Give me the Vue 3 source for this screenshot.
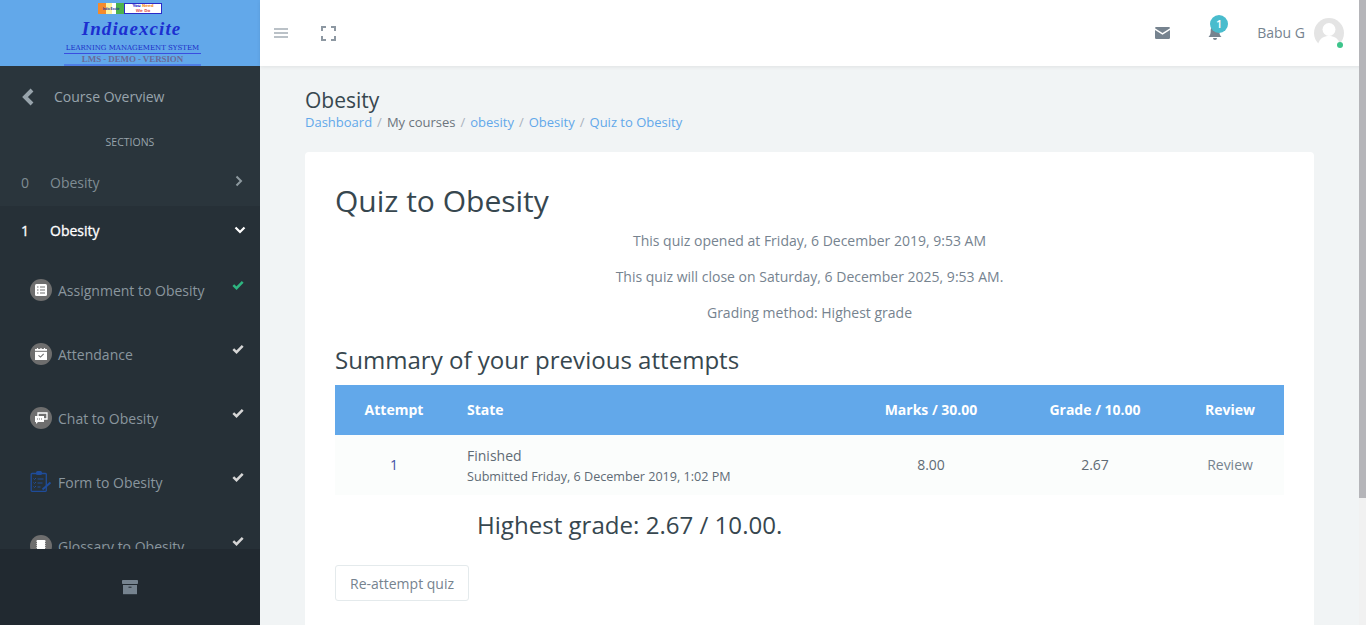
<script setup>
const items = [
  { name: 'Assignment to Obesity', icon: 'assign', done: true },
  { name: 'Attendance', icon: 'attend' },
  { name: 'Chat to Obesity', icon: 'chat' },
  { name: 'Form to Obesity', icon: 'form' },
  { name: 'Glossary to Obesity', icon: 'gloss' }
]
</script>

<template>
  <div class="app">
    <aside class="side">
      <div class="logo">
        <div class="logo-top">
          <span class="flag"><span class="flag-t">India Excite</span></span>
          <span class="need"><span>You <b>Need</b></span><span class="we">We Do</span></span>
        </div>
        <div class="brand">Indiaexcite</div>
        <div class="lms">LEARNING MANAGEMENT SYSTEM</div>
        <div class="demo">LMS - DEMO - VERSION</div>
      </div>
      <nav class="nav">
        <div class="back">
          <svg width="14" height="18" viewBox="0 0 14 18"><path d="M11 2 4 9l7 7" fill="none" stroke="#98a4ac" stroke-width="4"/></svg>
          <span>Course Overview</span>
        </div>
        <div class="sec-title">SECTIONS</div>
        <div class="sec">
          <span class="num">0</span><span class="sec-name">Obesity</span>
          <svg class="chev" width="8" height="12" viewBox="0 0 8 12"><path d="M1.500 1.500 6 6l-4.500 4.500" fill="none" stroke="#8d999f" stroke-width="2"/></svg>
        </div>
        <div class="sec open">
          <span class="num">1</span><span class="sec-name">Obesity</span>
          <svg class="chev-d" width="12" height="8" viewBox="0 0 12 8"><path d="M1.500 1.500 6 6l4.500-4.500" fill="none" stroke="#fff" stroke-width="2.200"/></svg>
        </div>
        <ul class="list">
          <li v-for="it in items" :key="it.name" class="item">
            <span class="ic" :class="{ blue: it.icon === 'form' }">
              <svg v-if="it.icon === 'assign'" width="14" height="14" viewBox="0 0 14 14"><rect x="1" y="1" width="12" height="12" rx="1.500" fill="#fff"/><path d="M3 4h1.500M6 4h5M3 7h1.500M6 7h5M3 10h1.500M6 10h5" stroke="#6e6e6e" stroke-width="1.100"/></svg>
              <svg v-else-if="it.icon === 'attend'" width="14" height="14" viewBox="0 0 14 14"><path d="M1 2h12v11H1z" fill="#fff"/><path d="M1 4.300h12" stroke="#6e6e6e"/><path d="M3.500 1v2M7 1v2M10.500 1v2" stroke="#fff" stroke-width="1.200"/><path d="m4.500 8.300 2 1.800 3.200-3.200" fill="none" stroke="#6e6e6e" stroke-width="1.100"/></svg>
              <svg v-else-if="it.icon === 'chat'" width="14" height="14" viewBox="0 0 14 14"><path d="M4 2h9v6H4z" fill="none" stroke="#fff" stroke-width="1.300"/><path d="M1 5h9v6H4l-2 2v-2H1z" fill="#fff"/><path d="M3 8h1M5 8h1M7 8h1" stroke="#6e6e6e"/></svg>
              <svg v-else-if="it.icon === 'form'" width="22" height="24" viewBox="0 0 22 24"><path d="M2 3.500h13.500a.8.8 0 0 1 .8.8V20.500a.8.8 0 0 1-.8.8H2a.8.8 0 0 1-.8-.8V4.300a.8.8 0 0 1 .8-.8z" fill="none" stroke="#1f4c9a" stroke-width="1.300"/><rect x="6" y="1" width="6" height="4" rx="1.500" fill="#1f4c9a"/><path d="M3.500 8.500l1 1 1.500-1.500M7.500 9h6M3.500 12.500l1 1 1.500-1.500M7.500 13h5M3.500 16.500l1 1 1.500-1.500M7.500 17h3" fill="none" stroke="#1f4c9a" stroke-width="1"/><path d="M12.500 19.500l8-7" stroke="#1f4c9a" stroke-width="2"/></svg>
              <svg v-else width="14" height="14" viewBox="0 0 14 14"><rect x="2.500" y="1" width="9" height="12" rx="1" fill="#fff"/><path d="M2.500 3v8M11.500 3v8" stroke="#6e6e6e" stroke-dasharray="1 1"/></svg>
            </span>
            <span class="item-name">{{ it.name }}</span>
            <svg class="check" :class="{ green: it.done }" width="12" height="10" viewBox="0 0 12 10"><path d="M1.300 5.200 4.500 8.200 10.700 1.800" fill="none" stroke="currentColor" stroke-width="2.500"/></svg>
          </li>
        </ul>
      </nav>
      <div class="side-foot">
        <svg width="16" height="15" viewBox="0 0 16 15"><rect y="0" width="16" height="4" rx=".8" fill="#76838f"/><path d="M1 5h14v9.200H1z" fill="#76838f"/><path d="M6.500 7.200h3" stroke="#212930" stroke-width="1"/></svg>
      </div>
    </aside>

    <div class="main">
      <header class="top">
        <button class="ibtn menu" aria-label="Menu"><svg width="14" height="10" viewBox="0 0 14 10"><path d="M0 1h14M0 5h14M0 9h14" stroke="#76838f" stroke-width="1.200"/></svg></button>
        <button class="ibtn full" aria-label="Fullscreen"><svg width="15" height="15" viewBox="0 0 15 15"><path d="M1 5V1h4M10 1h4v4M14 10v4h-4M5 14H1v-4" fill="none" stroke="#8d98a2" stroke-width="2"/></svg></button>
        <div class="grow"></div>
        <svg class="mail" width="15" height="12" viewBox="0 0 15 12"><path d="M0 1.300A1.300 1.300 0 0 1 1.300 0h12.400A1.300 1.300 0 0 1 15 1.300L7.500 6 0 1.300z" fill="#76838f"/><path d="M0 3l7.500 4.700L15 3v7.700a1.300 1.300 0 0 1-1.300 1.300H1.300A1.300 1.300 0 0 1 0 10.700z" fill="#76838f"/></svg>
        <div class="bell">
          <svg width="14" height="16" viewBox="0 0 14 16"><path d="M7 1c3 0 4.300 2.300 4.300 5 0 3 .9 4.700 2.200 6H.5C1.800 10.700 2.700 9 2.700 6 2.700 3.300 4 1 7 1z" fill="#76838f"/><path d="M5 13h4a2 2 0 0 1-4 0z" fill="#76838f"/></svg>
          <span class="badge">1</span>
        </div>
        <span class="user">Babu G</span>
        <div class="avatar">
          <svg width="30" height="30" viewBox="0 0 30 30"><circle cx="15" cy="15" r="15" fill="#e4e4e4"/><circle cx="15" cy="11.500" r="6.500" fill="#fff"/><path d="M4 26c2-6 6-8 11-8s9 2 11 8a15 15 0 0 1-22 0z" fill="#fff"/></svg>
          <span class="online"></span>
        </div>
      </header>

      <div class="content">
        <h4 class="page-title">Obesity</h4>
        <div class="crumbs">
          <a>Dashboard</a><i>/</i><span>My courses</span><i>/</i><a>obesity</a><i>/</i><a>Obesity</a><i>/</i><a>Quiz to Obesity</a>
        </div>
        <section class="card">
          <h2 class="title">Quiz to Obesity</h2>
          <p class="info">This quiz opened at Friday, 6 December 2019, 9:53 AM</p>
          <p class="info">This quiz will close on Saturday, 6 December 2025, 9:53 AM.</p>
          <p class="info">Grading method: Highest grade</p>
          <h3 class="sub">Summary of your previous attempts</h3>
          <table class="tbl">
            <thead>
              <tr>
                <th class="c1">Attempt</th>
                <th class="c2">State</th>
                <th class="c3">Marks / 30.00</th>
                <th class="c4">Grade / 10.00</th>
                <th class="c5">Review</th>
              </tr>
            </thead>
            <tbody>
              <tr>
                <td class="c1 link">1</td>
                <td class="c2">Finished<div class="small">Submitted Friday, 6 December 2019, 1:02 PM</div></td>
                <td class="c3">8.00</td>
                <td class="c4">2.67</td>
                <td class="c5 rev">Review</td>
              </tr>
            </tbody>
          </table>
          <div class="highest">Highest grade: 2.67 / 10.00.</div>
          <button class="btn">Re-attempt quiz</button>
        </section>
      </div>
    </div>
    <div class="sbar"><div class="thumb"></div></div>
  </div>
</template>

<style>
html, body { margin: 0; height: 100%; overflow: hidden; }
</style>

<style scoped>
.app { display: flex; width: 1366px; height: 625px; overflow: hidden; position: relative; font-family: "Open Sans", sans-serif; font-size: 14px; color: #6c757d; background: #f1f4f5; }
.side { width: 260px; flex: none; display: flex; flex-direction: column; background: #263238; }
.logo { height: 66px; flex: none; background: #62a8ea; display: flex; flex-direction: column; align-items: center; overflow: hidden; box-sizing: border-box; padding-top: 3px; }
.logo-top { display: flex; height: 11px; }
.flag { width: 26px; background: linear-gradient(90deg, #f58b2c 0 30%, #fdf3a0 30% 55%, #fff 55% 70%, #4cb24c 70%); display: flex; align-items: center; justify-content: center; overflow: hidden; }
.flag-t { font: bold 3px "Liberation Sans", sans-serif; color: #1a2a9a; white-space: nowrap; }
.need { width: 38px; background: #fff; border: 1px solid #2a2ac8; box-sizing: border-box; display: flex; flex-direction: column; align-items: center; font: bold 4px/4.500px "DejaVu Sans", sans-serif; color: #2a2ac8; overflow: hidden; white-space: nowrap; }
.need b { color: #f09030; }
.we { color: #e05a5a; }
.brand { font: italic bold 19px/20px "Liberation Serif", serif; color: #1c2fd0; letter-spacing: 1.100px; margin: 5px 0 0 3px; height: 20px; }
.lms { font: 7px/10px "DejaVu Serif", serif; color: #1c2fc8; width: 137px; text-align: center; white-space: nowrap; border-bottom: 1px solid #3a4de0; margin: 4px 0 0 5px; }
.demo { font: bold 9px/10px "Liberation Serif", serif; color: #6a6a9a; width: 137px; text-align: center; letter-spacing: -.1px; border-bottom: 2px solid #4f7fe6; margin-left: 5px; white-space: nowrap; }
.nav { flex: 1; min-height: 0; overflow: hidden; background: #2a353c; display: flex; flex-direction: column; }
.back { height: 61px; flex: none; display: flex; align-items: center; padding-left: 21px; color: #98a4ac; box-sizing: border-box; }
.back span { margin-left: 19px; }
.sec-title { font-size: 10.500px; line-height: 14px; text-align: center; color: #98a4ac; margin-top: 8px; height: 23px; flex: none; }
.sec { display: flex; align-items: center; height: 48px; flex: none; padding-left: 21px; position: relative; color: #7f8c93; }
.sec.open { color: #fff; -webkit-text-stroke: .3px #fff; background: #263037; }
.num { width: 29px; }
.chev { position: absolute; left: 235px; top: 17px; }
.chev-d { position: absolute; left: 234px; top: 20px; }
.list { list-style: none; margin: 0; padding: 4px 0 0; background: #263037; flex: none; }
.item { height: 64px; display: flex; align-items: center; position: relative; padding-left: 30px; color: #8a969e; }
.ic { width: 22px; height: 22px; border-radius: 50%; background: #6e6e6e; display: flex; align-items: center; justify-content: center; flex: none; }
.ic.blue { background: none; }
.item-name { margin-left: 6px; }
.check { position: absolute; left: 232px; top: 22px; color: #d6d6d6; }
.check.green { color: #2eb580; }
.side-foot { height: 76px; flex: none; background: #212930; display: flex; align-items: center; justify-content: center; }
.main { flex: 1; min-width: 0; display: flex; flex-direction: column; }
.top { height: 66px; flex: none; background: #fff; box-shadow: 0 1px 4px rgba(0,0,0,.08); display: flex; align-items: center; position: relative; padding-right: 22px; box-sizing: border-box; width: 1106px; }
.ibtn { border: 0; background: none; padding: 0; display: flex; }
.menu { margin-left: 14px; }
.full { margin-left: 33px; }
.grow { flex: 1; }
.mail { margin-right: 38px; }
.bell { position: relative; display: flex; margin-right: 35px; }
.badge { position: absolute; left: 2px; top: -10px; width: 18px; height: 18px; border-radius: 50%; background: #49bccd; color: #fff; font-size: 11px; font-weight: 600; line-height: 18px; text-align: center; }
.user { color: #76838f; margin-right: 9px; position: relative; top: -1px; }
.avatar { position: relative; width: 30px; height: 30px; margin-top: -1px; display: flex; }
.online { position: absolute; right: 1px; bottom: 0; width: 6px; height: 6px; border-radius: 50%; background: #3dc48b; }
.content { padding: 0 52px 0 45px; flex: 1; min-height: 0; overflow: hidden; }
.page-title { font-size: 21px; font-weight: 400; line-height: 28px; margin: 20px 0 0; color: #37474f; }
.crumbs { font-size: 13px; line-height: 17px; margin-top: 0; color: #6c757d; white-space: nowrap; }
.crumbs a { color: #62a8ea; }
.crumbs i { font-style: normal; color: #aab2bd; margin: 0 5px; }
.card { background: #fff; border-radius: 4px; margin-top: 21px; padding: 30px; height: 600px; box-sizing: border-box; }
.title { font-size: 30px; font-weight: 400; line-height: 40px; margin: -1px 0 10px; color: #37474f; }
.info { margin: 0 0 17px; line-height: 19px; text-align: center; color: #76838f; }
.sub { font-size: 24.050px; font-weight: 400; line-height: 30px; margin: 23px 0 10px; color: #37474f; }
.tbl { border-collapse: collapse; width: 949px; table-layout: fixed; }
.tbl th { background: #62a8ea; color: #fff; font-weight: 700; height: 50px; padding: 0 0 2px; box-sizing: border-box; }
.tbl td { background: #fbfdfc; height: 60px; padding: 0 0 2px; box-sizing: border-box; color: #5f6b75; text-align: center; }
.c1 { width: 118px; text-align: center; }
.tbl .c2 { width: 395px; text-align: left; padding: 0 0 0 14px; box-sizing: border-box; }
.tbl th.c2 { padding-bottom: 2px; }
.c3 { width: 166px; }
.c4 { width: 162px; }
.c5 { width: 108px; }
.c3, .c4, .c5 { text-align: center; }
.tbl td.link { color: #3f51a5; }
.tbl td.rev { color: #76838f; }
.small { font-size: 12.600px; line-height: 17px; margin-top: 3px; }
.highest { font-size: 24.080px; line-height: 32px; color: #37474f; margin: 14px 0 24px 142px; }
.btn { display: block; width: 134px; height: 36px; box-sizing: border-box; background: #fff; border: 1px solid #e4eaec; border-radius: 3px; font: 14px "Open Sans", sans-serif; color: #76838f; padding: 0; }
.sbar { position: absolute; right: 0; top: 0; width: 7px; height: 625px; background: #f1f1f1; }
.thumb { width: 7px; height: 498px; background: #b5b5b9; }
</style>
